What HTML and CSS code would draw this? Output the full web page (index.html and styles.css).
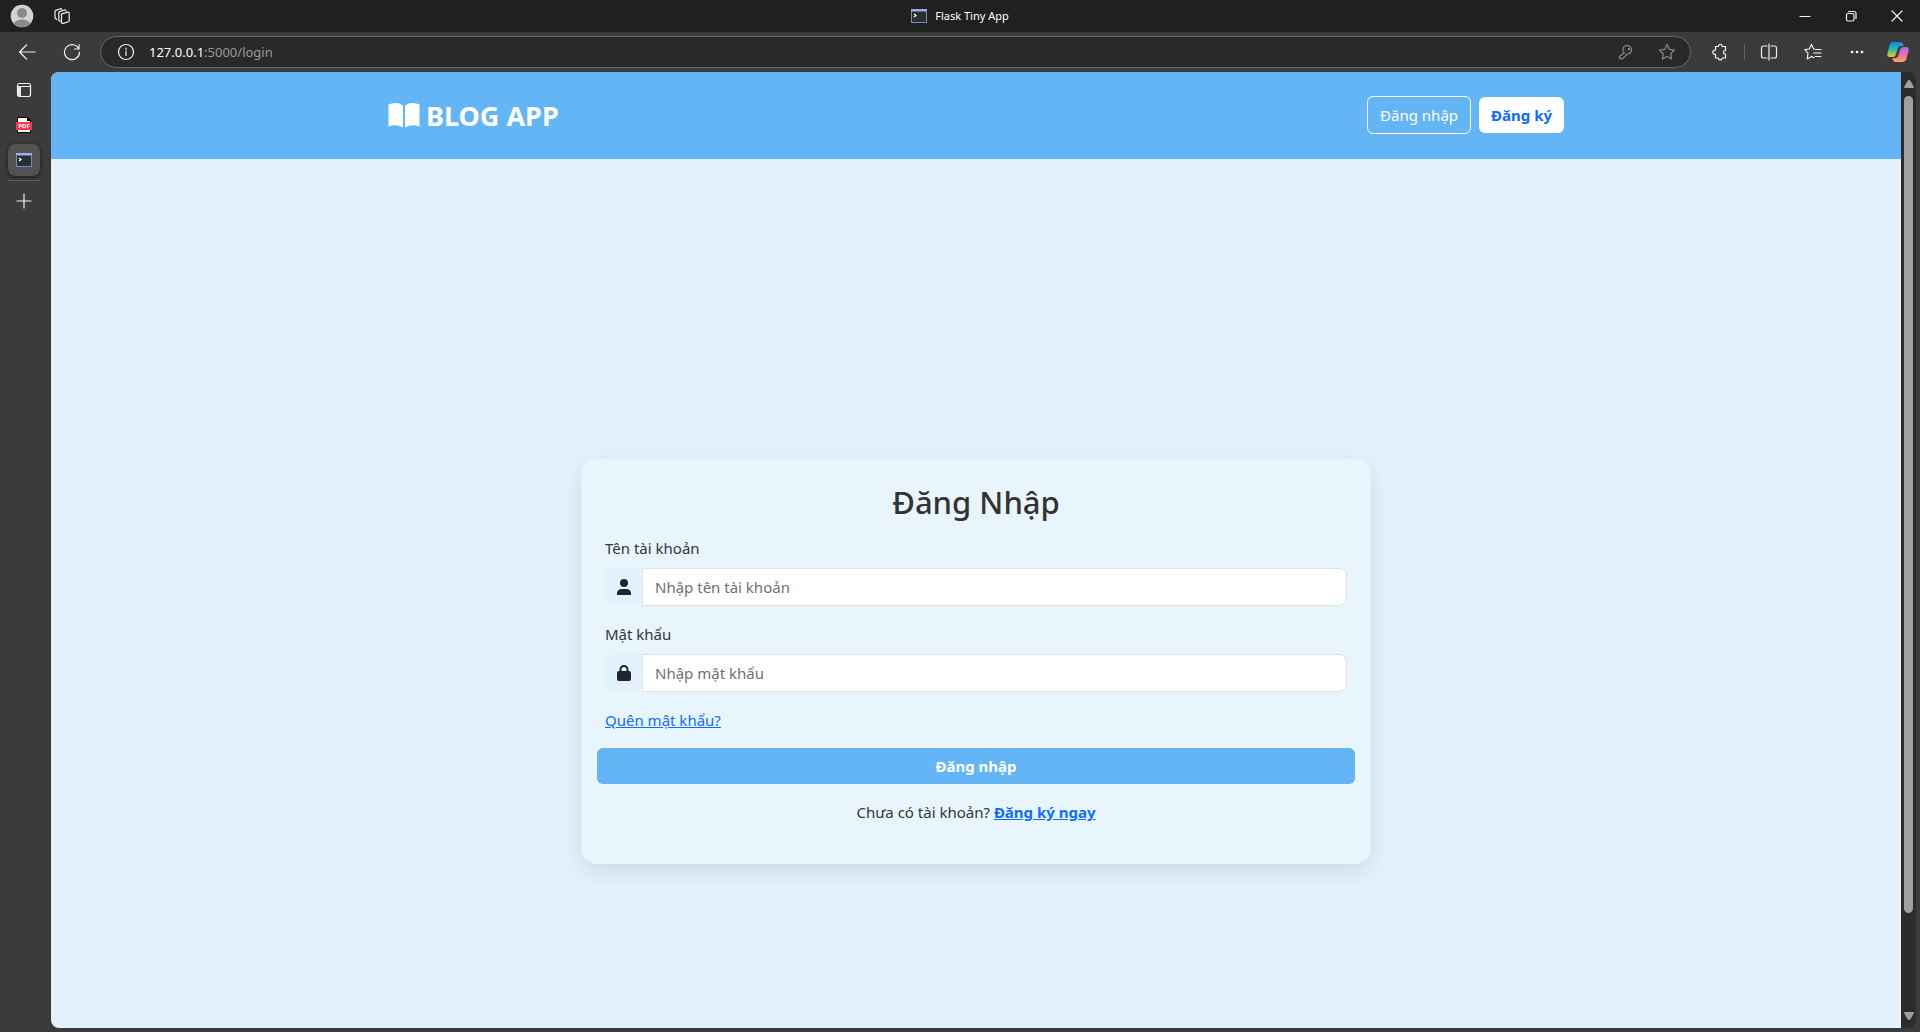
FILE: index.html
```html
<!DOCTYPE html>
<html lang="vi">
<head>
<meta charset="utf-8">
<meta name="viewport" content="width=device-width, initial-scale=1">
<title>Flask Tiny App</title>
<link rel="stylesheet" href="styles.css">
</head>
<body>
<svg width="0" height="0" class="defs" aria-hidden="true">
  <defs>
    <linearGradient id="cp-a" x1="0" y1="0" x2="0" y2="1"><stop offset="0" stop-color="#1b86e0"/><stop offset=".45" stop-color="#22b5c8"/><stop offset=".75" stop-color="#8bc63f"/><stop offset="1" stop-color="#f6c431"/></linearGradient>
    <linearGradient id="cp-b" x1="0" y1="0" x2="0" y2="1"><stop offset="0" stop-color="#a86cf0"/><stop offset=".5" stop-color="#ec6bb0"/><stop offset="1" stop-color="#ffa25a"/></linearGradient>
    <symbol id="terminal" viewBox="0 0 16 14">
      <rect x=".5" y=".5" width="15" height="13" fill="#2b2d31" stroke="#6f8fc8"/>
      <path d="M0 0h16v2.500H0z" fill="#8fb2ea"/><path d="M11 1h4" stroke="#e6a5b4"/>
      <path d="M3 5l2 1.500L3 8" fill="none" stroke="#fff" stroke-width="1.200"/>
    </symbol>
  </defs>
</svg>
<div class="browser">
  <header class="titlebar">
    <div class="title-left">
      <button class="ghost" aria-label="Profile"><svg width="24" height="24" viewBox="0 0 24 24"><circle cx="12" cy="12" r="11.300" fill="#d4d2d0"/><circle cx="12" cy="9" r="5" fill="#8b8988"/><path d="M4 20c.5-6 15.500-6 16 0a11.300 11.300 0 0 1-16 0z" fill="#8b8988"/></svg></button>
      <button class="ghost" aria-label="Workspaces"><svg width="18" height="18" viewBox="0 0 18 18" class="line"><path d="M8.500 6.800l6.500-1.600q1.200-.2 1.200 1v7.500q0 .8-.8 1.100l-5 1.600q-1.700.5-1.900-1.100z"/><path d="M7.200 14.500l-1.400-1.300V5.700q0-.8.8-1.100l5-1.600q1.200-.3 1.400.9"/><path d="M3.800 12.500L2 11V4.500q0-.8.8-1.100l4.700-1.700q1.200-.3 1.400.7"/></svg></button>
    </div>
    <div class="tab-title"><svg width="16" height="14"><use href="#terminal"/></svg><span>Flask Tiny App</span></div>
    <div class="window-buttons">
      <button class="ghost" aria-label="Minimize"><svg width="12" height="12" viewBox="0 0 12 12" class="line"><path d="M1 6.500h10"/></svg></button>
      <button class="ghost" aria-label="Restore"><svg width="12" height="12" viewBox="0 0 12 12" class="line"><rect x="1.500" y="3.500" width="7.500" height="7.500" rx="1.500"/><path d="M3.500 1.500h5.500a2 2 0 0 1 2 2v5"/></svg></button>
      <button class="ghost" aria-label="Close"><svg width="12" height="12" viewBox="0 0 12 12" class="line"><path d="M1 1l10 10M11 1L1 11"/></svg></button>
    </div>
  </header>

  <div class="toolbar">
    <button class="ghost" aria-label="Back"><svg width="18" height="18" viewBox="0 0 18 18" class="line"><path d="M8.500 2L1.500 9l7 7M1.500 9H17"/></svg></button>
    <button class="ghost" aria-label="Reload"><svg width="18" height="18" viewBox="0 0 18 18" class="line"><path d="M15.800 6A7.500 7.500 0 1 0 16.500 9M16 1.500V6h-4.500"/></svg></button>
    <div class="address">
      <svg width="18" height="18" viewBox="0 0 18 18" class="line"><circle cx="9" cy="9" r="7.500"/><path d="M9 8v4.500M9 5.200v1.300"/></svg>
      <p class="url"><b>127.0.0.1</b>:5000/login</p>
      <svg width="16" height="16" viewBox="0 0 16 16" class="line dim"><path d="M6.200 8.800A4.300 4.300 0 1 1 9.200 10L5 14.300q-.5.500-1 .5H2.500q-1 0-1-1V12.500z"/><circle cx="11" cy="5" r=".6"/></svg>
      <svg width="18" height="18" viewBox="0 0 18 18" class="line dim"><path d="M9 1.500l2.300 4.800 5.200.7-3.800 3.700.9 5.300L9 13.500 4.400 16l.9-5.300L1.500 7l5.200-.7z"/></svg>
    </div>
    <div class="tools">
      <button class="ghost" aria-label="Extensions"><svg width="18" height="18" viewBox="0 0 18 18" class="line"><path d="M4.500 3.500h3c-.4-3 4-3 3.600 0h3.400v4c-2.700-.2-2.700 3.700 0 3.500v4h-3.400c.2 2.600-3.800 2.600-3.600 0h-3v-3.700c-3.600.4-3.600-4.500 0-4.100z"/></svg></button>
      <span class="divider"></span>
      <button class="ghost" aria-label="Split screen"><svg width="18" height="18" viewBox="0 0 18 18" class="line"><path d="M9 1v16M7 3H3.500a2 2 0 0 0-2 2v8a2 2 0 0 0 2 2H7M11 3h3.500a2 2 0 0 1 2 2v8a2 2 0 0 1-2 2H11"/></svg></button>
      <button class="ghost" aria-label="Favorites"><svg width="18" height="18" viewBox="0 0 18 18" class="line"><path d="M10.500 6h-.8L7.500 1.500 5.300 6l-4.500.7L4 10.200 3.200 16l4.500-2.500M11.500 6.500H17M9.500 10H17M11 13.500h6M7.700 13.500l2 1.200"/></svg></button>
      <button class="ghost" aria-label="More"><svg width="18" height="18" viewBox="0 0 18 18" fill="#fff"><circle cx="4" cy="9" r="1.300"/><circle cx="9" cy="9" r="1.300"/><circle cx="14" cy="9" r="1.300"/></svg></button>
      <button class="ghost copilot" aria-label="Copilot"><svg width="24" height="22" viewBox="0 0 24 22"><path d="M7 1h7.500q2 0 2.600 2l.5 2h-3q-2 0-2.700 2l-2 6.500Q9 16 7 16H4q-3.500 0-2.600-3.500l2.300-8.700Q4.500 1 7 1z" fill="url(#cp-a)"/><path d="M17 21H9.500q-2 0-2.600-2l-.5-2h3q2 0 2.700-2l2-6.500Q15 6 17 6h3q3.500 0 2.600 3.500l-2.300 8.700Q19.500 21 17 21z" fill="url(#cp-b)"/></svg></button>
    </div>
  </div>

  <div class="workspace">
    <nav class="tabs" aria-label="Tabs">
      <button class="ghost tab" aria-label="Tab actions"><svg width="16" height="16" viewBox="0 0 16 16" class="line"><rect x="1.500" y="1.500" width="13" height="13" rx="2"/><path d="M1.500 4.500h13"/><path d="M2 4h3v10.500H2z" fill="#e8e8e8" stroke="none"/></svg></button>
      <button class="ghost tab" aria-label="PDF"><svg width="16" height="16" viewBox="0 0 16 16"><path d="M1 0h10.500L15 3.500V16H1z" fill="#000"/><path d="M2 1h9v3h3v11H2z" fill="#fff"/><path d="M0 5h16v8H0z" fill="#f03a47"/><text x="8" y="11" text-anchor="middle" class="pdf">PDF</text></svg></button>
      <button class="ghost tab active" aria-label="Flask Tiny App"><svg width="16" height="14"><use href="#terminal"/></svg></button>
      <span class="rule"></span>
      <button class="ghost tab" aria-label="New tab"><svg width="16" height="16" viewBox="0 0 16 16" class="line"><path d="M8 1v14M1 8h14"/></svg></button>
    </nav>

    <div class="page">
      <header class="site-header">
        <div class="container">
          <a class="brand" href="#"><svg width="32" height="26" viewBox="0 0 32 26"><path d="M15 2.500v22Q8 20.500 .5 23.500V3Q0 1.500 2 1q8-2.500 13 1.500zM17 2.500v22q7-4 14.500-1V3q.5-1.500-1.500-2-8-2.500-13 1.500z" fill="#fff"/></svg><span>BLOG APP</span></a>
          <div class="auth"><a class="btn outline" href="#">Đăng nhập</a><a class="btn solid" href="#">Đăng ký</a></div>
        </div>
      </header>
      <main>
        <form class="card">
          <h1>Đăng Nhập</h1>
          <div class="fields">
            <div class="field">
              <label for="user">Tên tài khoản</label>
              <div class="group"><span class="addon"><svg width="16" height="16" viewBox="0 0 16 16"><circle cx="8" cy="4" r="4"/><path d="M1 16v-1.500C1 11.500 3 10 5.500 10h5c2.500 0 4.500 1.500 4.500 4.500V16z"/></svg></span><input id="user" type="text" placeholder="Nhập tên tài khoản"></div>
            </div>
            <div class="field">
              <label for="pass">Mật khẩu</label>
              <div class="group"><span class="addon"><svg width="16" height="16" viewBox="0 0 16 16"><rect x="1" y="6" width="14" height="10" rx="2"/><path d="M4.500 7V4.500a3.500 3.500 0 0 1 7 0V7" fill="none" stroke="#212529" stroke-width="2"/></svg></span><input id="pass" type="password" placeholder="Nhập mật khẩu"></div>
            </div>
            <a class="link" href="#">Quên mật khẩu?</a>
          </div>
          <button class="submit" type="submit">Đăng nhập</button>
          <p class="signup">Chưa có tài khoản? <a class="link strong" href="#">Đăng ký ngay</a></p>
        </form>
      </main>
    </div>

    <div class="scrollbar" aria-hidden="true">
      <svg width="10" height="8" viewBox="0 0 10 8"><path d="M5 0q1 0 1.500 1L10 7q0 1-1 1H1Q0 8 0 7l3.500-6Q4 0 5 0z"/></svg>
      <span class="track"><span class="thumb"></span></span>
      <svg width="10" height="8" viewBox="0 0 10 8"><path d="M5 8Q4 8 3.500 7L0 1q0-1 1-1h8q1 0 1 1L6.500 7Q6 8 5 8z"/></svg>
    </div>
  </div>
</div>
</body>
</html>
```
FILE: styles.css
```css
* { box-sizing: border-box; }

body {
  margin: 0;
  font: 15px/24px "Noto Sans", "Open Sans", sans-serif;
  color: #30363b;
  background: #3b3b3b;
}

h1, p { margin: 0; }
svg { display: block; flex: none; }
.defs { position: absolute; }

.browser {
  display: flex;
  flex-direction: column;
  height: 100vh;
  overflow: hidden;
}

.ghost {
  display: flex;
  align-items: center;
  justify-content: center;
  padding: 0;
  border: 0;
  background: none;
}

.line {
  fill: none;
  stroke: #f0f0f0;
  stroke-width: 1.2;
  stroke-linecap: round;
  stroke-linejoin: round;
}
.dim { stroke: #8a8a8a; }

/* Window title bar */
.titlebar {
  display: grid;
  grid-template-columns: 1fr auto 1fr;
  align-items: center;
  height: 32px;
  flex: none;
  background: #202020;
  color: #fff;
}
.title-left { display: flex; align-items: center; gap: 19px; padding-left: 10px; }
.tab-title { display: flex; align-items: center; gap: 8px; font-size: 11px; }
.window-buttons { display: flex; justify-content: flex-end; }
.window-buttons .ghost { width: 46px; height: 32px; }

/* Navigation toolbar */
.toolbar {
  display: flex;
  align-items: center;
  height: 40px;
  flex: none;
  padding: 0 10px 0 18px;
  gap: 27px;
}
.address {
  display: flex;
  align-items: center;
  gap: 24px;
  flex: 1;
  height: 32px;
  margin-left: -8px;
  padding: 0 14px 0 16px;
  border: 1px solid #686868;
  border-radius: 16px;
  background: #292929;
}
.url { flex: 1; font-size: 13px; color: #9a9a9a; margin-left: -10px; }
.url b { font-weight: 400; color: #fff; }
.tools { display: flex; align-items: center; gap: 26px; margin-left: -7px; }
.copilot { margin-left: -6px; }
.divider { width: 1px; height: 16px; margin: 0 -11px; background: #666; }

/* Vertical tabs and page area */
.workspace { display: flex; flex: 1; min-height: 0; padding-bottom: 4px; }
.tabs {
  display: flex;
  flex-direction: column;
  align-items: center;
  gap: 3px;
  width: 51px;
  flex: none;
  padding: 2px 4px 0 0;
}
.tab { width: 32px; height: 32px; border-radius: 8px; }
.tab.active { background: #525252; box-shadow: 0 1px 4px #1c1c1c; }
.rule { width: 32px; height: 1px; margin: 1px 0; background: #606060; }
.pdf { font: bold 6px/6px "Noto Sans", sans-serif; fill: #fff; }

.page {
  flex: 1;
  overflow: hidden;
  border-radius: 8px 0 0 8px;
  background: #e3f2fd;
}

.scrollbar {
  display: flex;
  flex-direction: column;
  align-items: center;
  gap: 8px;
  width: 15px;
  margin-right: 4px;
  padding: 8px 0;
  border-radius: 0 8px 8px 0;
  background: #2c2c2c;
  fill: #a0a0a0;
}
.track { flex: 1; width: 9px; }
.thumb { display: block; height: 90%; border-radius: 5px; background: #a0a0a0; }

/* Site header */
.site-header { background: #64b5f6; }
.container {
  display: flex;
  align-items: center;
  justify-content: space-between;
  max-width: 1200px;
  height: 87px;
  margin: 0 auto;
  padding: 0 12px;
}
.brand {
  display: flex;
  align-items: center;
  gap: 6px;
  font-size: 27px;
  font-weight: 700;
  color: #fff;
  text-decoration: none;
}
.auth { display: flex; align-items: center; gap: 8px; padding-bottom: 2px; }
.btn { padding: 6px 12px; border-radius: 6px; text-decoration: none; }
.outline { border: 1px solid #fff; color: #fff; }
.solid { background: #fff; color: #0d6efd; font-weight: 700; }

/* Login card */
main { padding: 300px 24px; }
.card {
  max-width: 790px;
  margin: 0 auto;
  padding: 24px 16px 40px;
  border-radius: 16px;
  background: #e9f5fc;
  box-shadow: 0 8px 24px rgba(0, 0, 0, .1);
}
.card h1 {
  margin-bottom: 14px;
  font-size: 31px;
  line-height: 39px;
  font-weight: 500;
  text-align: center;
  color: #333;
}
.fields { padding: 0 8px; }
.field { margin-bottom: 16px; }
.field label { display: block; margin-bottom: 8px; }
.group { display: flex; height: 38px; }
.addon {
  display: flex;
  align-items: center;
  padding: 0 10px 0 11px;
  border-radius: 6px 0 0 6px;
  background: #e3f2fd;
  fill: #212529;
}
.group input {
  flex: 1;
  min-width: 0;
  padding: 0 12px;
  border: 1px solid #dee2e6;
  border-radius: 0 8px 8px 0;
  font: inherit;
  background: #fff;
}
.group input::placeholder { color: #6c7175; }
.link { color: #0d6efd; }
.strong { font-weight: 700; }
.submit {
  display: block;
  width: 100%;
  height: 36px;
  margin: 16px 0;
  border: 0;
  border-radius: 6px;
  background: #64b5f6;
  color: #fff;
  font: inherit;
  font-weight: 700;
}
.signup { text-align: center; }
```
